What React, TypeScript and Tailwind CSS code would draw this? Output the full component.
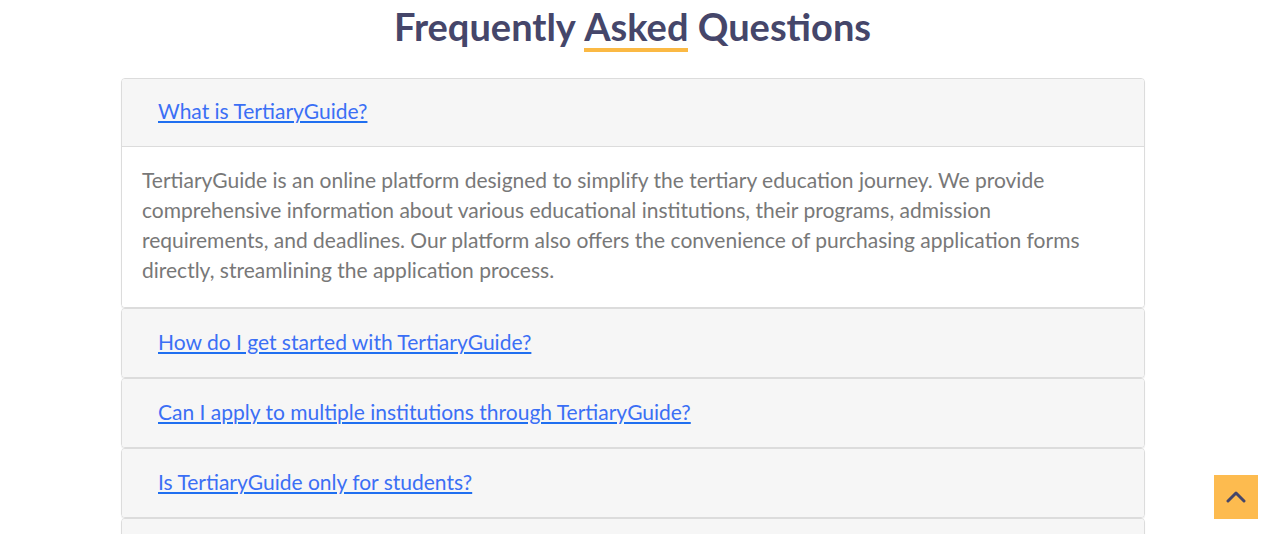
import { useState } from "react";

const faqs = [
  {
    q: "What is TertiaryGuide?",
    a: "TertiaryGuide is an online platform designed to simplify the tertiary education journey. We provide comprehensive information about various educational institutions, their programs, admission requirements, and deadlines. Our platform also offers the convenience of purchasing application forms directly, streamlining the application process.",
  },
  {
    q: "How do I get started with TertiaryGuide?",
    a: "Simply create an account, browse institutions and programs, and purchase the application forms you need.",
  },
  {
    q: "Can I apply to multiple institutions through TertiaryGuide?",
    a: "Yes. You can purchase forms for as many institutions as you like.",
  },
  {
    q: "Is TertiaryGuide only for students?",
    a: "No. Parents, guardians and counsellors can use it too.",
  },
  {
    q: "How do I pay for application forms?",
    a: "Payments can be made securely online.",
  },
];

const font = { fontFamily: "Lato, 'Noto Sans', sans-serif" };

export default function App() {
  const [open, setOpen] = useState(0);

  return (
    <div className="min-h-screen bg-white" style={font}>
      <h2 className="pl-[2px] pt-[2px] text-center text-[38px] font-bold leading-[48px] text-[#45466a]">
        Frequently{" "}
        <span className="relative inline-block">
          Asked
          <span className="absolute bottom-[-2px] left-0 right-0 h-[4px] bg-[#fbb944]" />
        </span>{" "}
        Questions
      </h2>

      <div className="ml-[121px] mt-[28px] w-[1024px]">
        {faqs.map((f, i) => (
          <div
            key={f.q}
            className="overflow-hidden rounded-[4px] border border-[#dcdcdc] shadow-[0_1px_1px_rgba(0,0,0,0.08)]"
          >
            <div
              className={
                "flex h-[68px] items-center bg-[#f6f6f6] px-5 pb-[3px] " +
                (open === i ? "border-b border-[#dcdcdc]" : "")
              }
            >
              <button
                className="px-4 text-left text-[21px] leading-[24px] text-[#3b6ff5] underline decoration-[#1f6ff0] decoration-[2px] underline-offset-[2px]"
                onClick={() => setOpen(open === i ? -1 : i)}
              >
                {f.q}
              </button>
            </div>
            {open === i && (
              <div className="bg-white pb-[22px] pl-5 pr-[30px] pt-[18px] text-[21px] leading-[30px] text-[#787878]">
                {f.a}
              </div>
            )}
          </div>
        ))}
      </div>

      <button className="fixed bottom-[15px] right-[5px] flex h-[44px] w-[44px] items-center justify-center bg-[#fdbb4f]">
        <svg width="20" height="12" viewBox="0 0 20 12" fill="none">
          <polyline
            points="2,10 10,2 18,10"
            stroke="#45466a"
            strokeWidth="3"
            strokeLinecap="round"
            strokeLinejoin="round"
          />
        </svg>
      </button>
    </div>
  );
}
